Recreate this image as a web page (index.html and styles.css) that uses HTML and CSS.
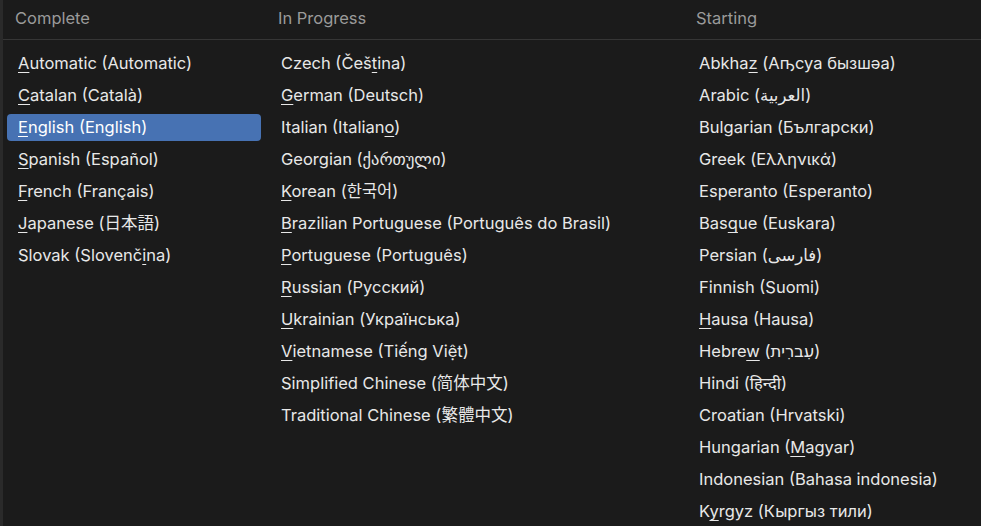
FILE: index.html
```html
<!DOCTYPE html>
<html lang="en">
<head>
<meta charset="utf-8">
<title>Language</title>
<link rel="stylesheet" href="styles.css">
</head>
<body>
<div class="menu">
  <div class="heads">
    <div class="head">Complete</div>
    <div class="head">In Progress</div>
    <div class="head">Starting</div>
  </div>
  <div class="cols">
    <ul class="col">
      <li class="item"><span class="k">A</span>utomatic (Automatic)</li>
      <li class="item"><span class="k">C</span>atalan (Català)</li>
      <li class="item active"><span class="k">E</span>nglish (English)</li>
      <li class="item"><span class="k">S</span>panish (Español)</li>
      <li class="item"><span class="k">F</span>rench (Français)</li>
      <li class="item"><span class="k">J</span>apanese (日本語)</li>
      <li class="item">Slovak (Slovenč<span class="k">i</span>na)</li>
    </ul>
    <ul class="col">
      <li class="item">Czech (Češ<span class="k">t</span>ina)</li>
      <li class="item"><span class="k">G</span>erman (Deutsch)</li>
      <li class="item">Italian (Italian<span class="k">o</span>)</li>
      <li class="item">Georgian (ქართული)</li>
      <li class="item"><span class="k">K</span>orean (한국어)</li>
      <li class="item"><span class="k">B</span>razilian Portuguese (Português do Brasil)</li>
      <li class="item"><span class="k">P</span>ortuguese (Português)</li>
      <li class="item"><span class="k">R</span>ussian (Русский)</li>
      <li class="item"><span class="k">U</span>krainian (Українська)</li>
      <li class="item"><span class="k">V</span>ietnamese (Tiếng Việt)</li>
      <li class="item">Simplified Chinese (简体中文)</li>
      <li class="item">Traditional Chinese (繁體中文)</li>
    </ul>
    <ul class="col">
      <li class="item">Abkha<span class="k">z</span> (Аҧсуа бызшәа)</li>
      <li class="item">Arabic (<bdi>العربية</bdi>)</li>
      <li class="item">Bulgarian (Български)</li>
      <li class="item">Greek (Ελληνικά)</li>
      <li class="item">Esperanto (Esperanto)</li>
      <li class="item">Bas<span class="k">q</span>ue (Euskara)</li>
      <li class="item">Persian (<bdi>فارسی</bdi>)</li>
      <li class="item">Finnish (Suomi)</li>
      <li class="item"><span class="k">H</span>ausa (Hausa)</li>
      <li class="item">Hebre<span class="k">w</span> (<bdi>עִברִית</bdi>)</li>
      <li class="item">Hindi (हिन्दी)</li>
      <li class="item">Croatian (Hrvatski)</li>
      <li class="item">Hungarian (<span class="k">M</span>agyar)</li>
      <li class="item">Indonesian (Bahasa indonesia)</li>
      <li class="item">K<span class="k">y</span>rgyz (Кыргыз тили)</li>
    </ul>
  </div>
</div>
</body>
</html>
```
FILE: styles.css
```css
html, body {
  margin: 0;
  padding: 0;
  background: #1b1b1b;
  height: 100%;
  overflow: hidden;
}

body {
  font-family: Inter, "Noto Sans", "DejaVu Sans", "Noto Sans CJK JP", "Noto Sans CJK KR", sans-serif;
  font-size: 16.5px;
  color: #e8e8e8;
}

.menu {
  border-left: 3px solid #2a2a2a;
  min-height: 100%;
  box-sizing: border-box;
}

.heads,
.cols {
  display: grid;
  grid-template-columns: 254px 409px 1fr;
  column-gap: 9px;
  padding-left: 4px;
}

.heads {
  border-bottom: 1px solid #363636;
  height: 40px;
  box-sizing: border-box;
}

.head {
  padding-left: 8px;
  line-height: 36px;
  color: #9a9a9a;
  white-space: nowrap;
}

.cols {
  padding-top: 10px;
}

.col {
  list-style: none;
  margin: 0;
  padding: 0;
}

.item {
  height: 27px;
  line-height: 27px;
  margin-bottom: 5px;
  padding-left: 11px;
  border-radius: 4px;
  white-space: nowrap;
}

.item.active {
  background: #4772b3;
  color: #ffffff;
}

.k {
  text-decoration: underline;
  text-decoration-thickness: 1px;
  text-underline-offset: 3px;
}
```
